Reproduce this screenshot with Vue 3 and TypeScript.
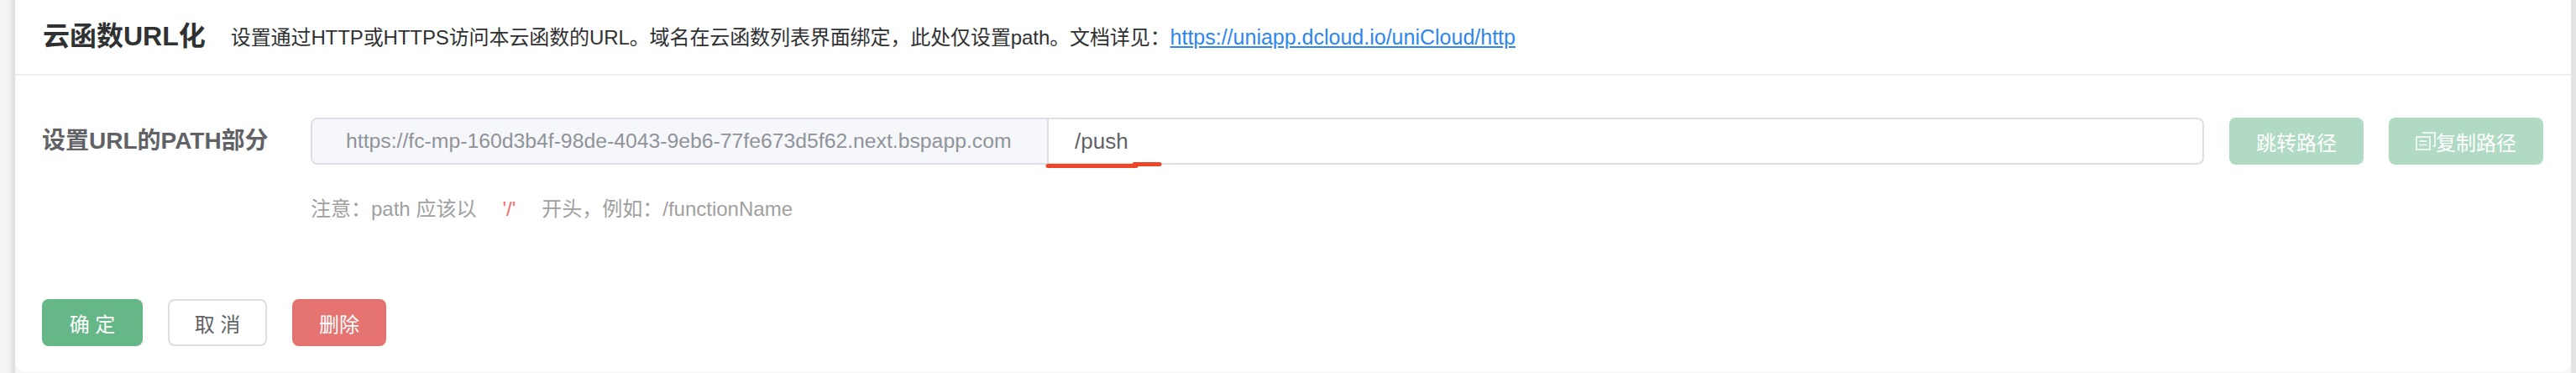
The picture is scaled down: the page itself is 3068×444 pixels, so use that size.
<script setup lang="ts">
const host = 'https://fc-mp-160d3b4f-98de-4043-9eb6-77fe673d5f62.next.bspapp.com'
const docUrl = 'https://uniapp.dcloud.io/uniCloud/http'
</script>

<template>
  <div class="page">
    <section class="card">
      <header class="card-head">
        <h2 class="title">云函数URL化</h2>
        <p class="desc">设置通过HTTP或HTTPS访问本云函数的URL。域名在云函数列表界面绑定，此处仅设置path。文档详见：<a class="link" :href="docUrl">{{ docUrl }}</a></p>
      </header>
      <div class="card-body">
        <div class="row">
          <label class="label">设置URL的PATH部分</label>
          <div class="field">
            <div class="input-group">
              <span class="prepend">{{ host }}</span>
              <span class="path">/push</span>
              <svg class="mark" width="140" height="10" viewBox="0 0 140 10" aria-hidden="true">
                <path d="M3 6.5H108" stroke="#ee4628" stroke-width="5" stroke-linecap="round" fill="none" />
                <path d="M106 4.5H136" stroke="#ee4628" stroke-width="5" stroke-linecap="round" fill="none" />
              </svg>
            </div>
            <p class="hint">注意：path 应该以<code class="slash">'/'</code>开头，例如：/functionName</p>
          </div>
          <button class="btn btn-green disabled jump" type="button">跳转路径</button>
          <button class="btn btn-green disabled copy" type="button">
            <svg class="copy-icon" width="24" height="22" viewBox="0 0 24 22" aria-hidden="true">
              <path d="M8 1H23V17H20.500M1 6H17V21H1Z M4 11H13M4 15.500H13" fill="none" stroke="#fff" stroke-width="1.500" />
            </svg>复制路径
          </button>
        </div>
        <div class="actions">
          <button class="btn btn-green confirm" type="button">确 定</button>
          <button class="btn btn-plain cancel" type="button">取 消</button>
          <button class="btn btn-red remove" type="button">删除</button>
        </div>
      </div>
    </section>
  </div>
</template>

<style>
html,
body {
  margin: 0;
  background: #f5f5f5;
}
</style>

<style scoped>
.page {
  width: 3068px;
  height: 444px;
  padding: 0 6px 2px 18px;
  box-sizing: border-box;
  background: linear-gradient(90deg, #f6f6f6 0, #f3f3f3 10px, #dddddd 18px, #f7f7f7 18px, #f7f7f7 3062px, #e3e3e3 3062px);
  font-family: "Liberation Sans", "Noto Sans CJK SC", sans-serif;
}
.card {
  height: 100%;
  background: #fff;
  border-radius: 0 0 10px 10px;
  display: flex;
  flex-direction: column;
}
.card-head {
  height: 90px;
  box-sizing: border-box;
  border-bottom: 2px solid #ebeef5;
  padding-left: 33px;
  display: flex;
  align-items: center;
}
.title {
  margin: -2px 30px 0 0;
  font-size: 32px;
  font-weight: 700;
  color: #303133;
  line-height: 80px;
}
.desc {
  margin: 0;
  font-size: 24px;
  letter-spacing: -0.1px;
  color: #303133;
  line-height: 90px;
}
.link {
  color: #2f86ee;
  font-size: 25px;
  letter-spacing: 0;
  text-decoration: underline;
}
.card-body {
  flex: 1;
  padding: 50px 32px 30px;
  display: flex;
  flex-direction: column;
  justify-content: space-between;
}
.row {
  display: flex;
  align-items: flex-start;
}
.label {
  width: 320px;
  flex: none;
  font-size: 28px;
  font-weight: 700;
  color: #606266;
  line-height: 56px;
}
.field {
  width: 2255px;
  flex: none;
}
.input-group {
  position: relative;
  display: flex;
  height: 56px;
  box-sizing: border-box;
  border: 2px solid #dcdfe6;
  border-radius: 8px;
  font-size: 26px;
  line-height: 52px;
}
.prepend {
  width: 877px;
  flex: none;
  padding-left: 40px;
  box-sizing: border-box;
  background: #f5f7fa;
  border-right: 2px solid #dcdfe6;
  border-radius: 6px 0 0 6px;
  color: #909399;
  font-size: 24.75px;
  white-space: nowrap;
}
.path {
  padding-left: 31px;
  color: #606266;
}
.mark {
  position: absolute;
  left: 873px;
  top: 49px;
}
.hint {
  margin: 36px 0 0;
  font-size: 24px;
  line-height: 34px;
  color: #a0a0a0;
}
.slash {
  margin: 0 31px;
  font-family: inherit;
  color: #f56c6c;
}
.btn {
  height: 56px;
  border-radius: 8px;
  border: 2px solid transparent;
  box-sizing: border-box;
  font-family: inherit;
  font-size: 24px;
  padding: 0;
  display: inline-flex;
  align-items: center;
  justify-content: center;
}
.btn-green {
  background: #65b788;
  color: #fff;
}
.disabled {
  background: #b0dac3;
}
.btn-plain {
  background: #fff;
  border-color: #dcdfe6;
  color: #606266;
}
.btn-red {
  background: #e57471;
  color: #fff;
}
.jump {
  width: 160px;
  margin-left: 30px;
}
.copy {
  width: 184px;
  margin-left: 30px;
}
.copy-icon {
  flex: none;
}
.actions {
  display: flex;
}
.confirm {
  width: 120px;
}
.cancel {
  width: 118px;
  margin-left: 30px;
}
.remove {
  width: 112px;
  margin-left: 30px;
}
</style>
